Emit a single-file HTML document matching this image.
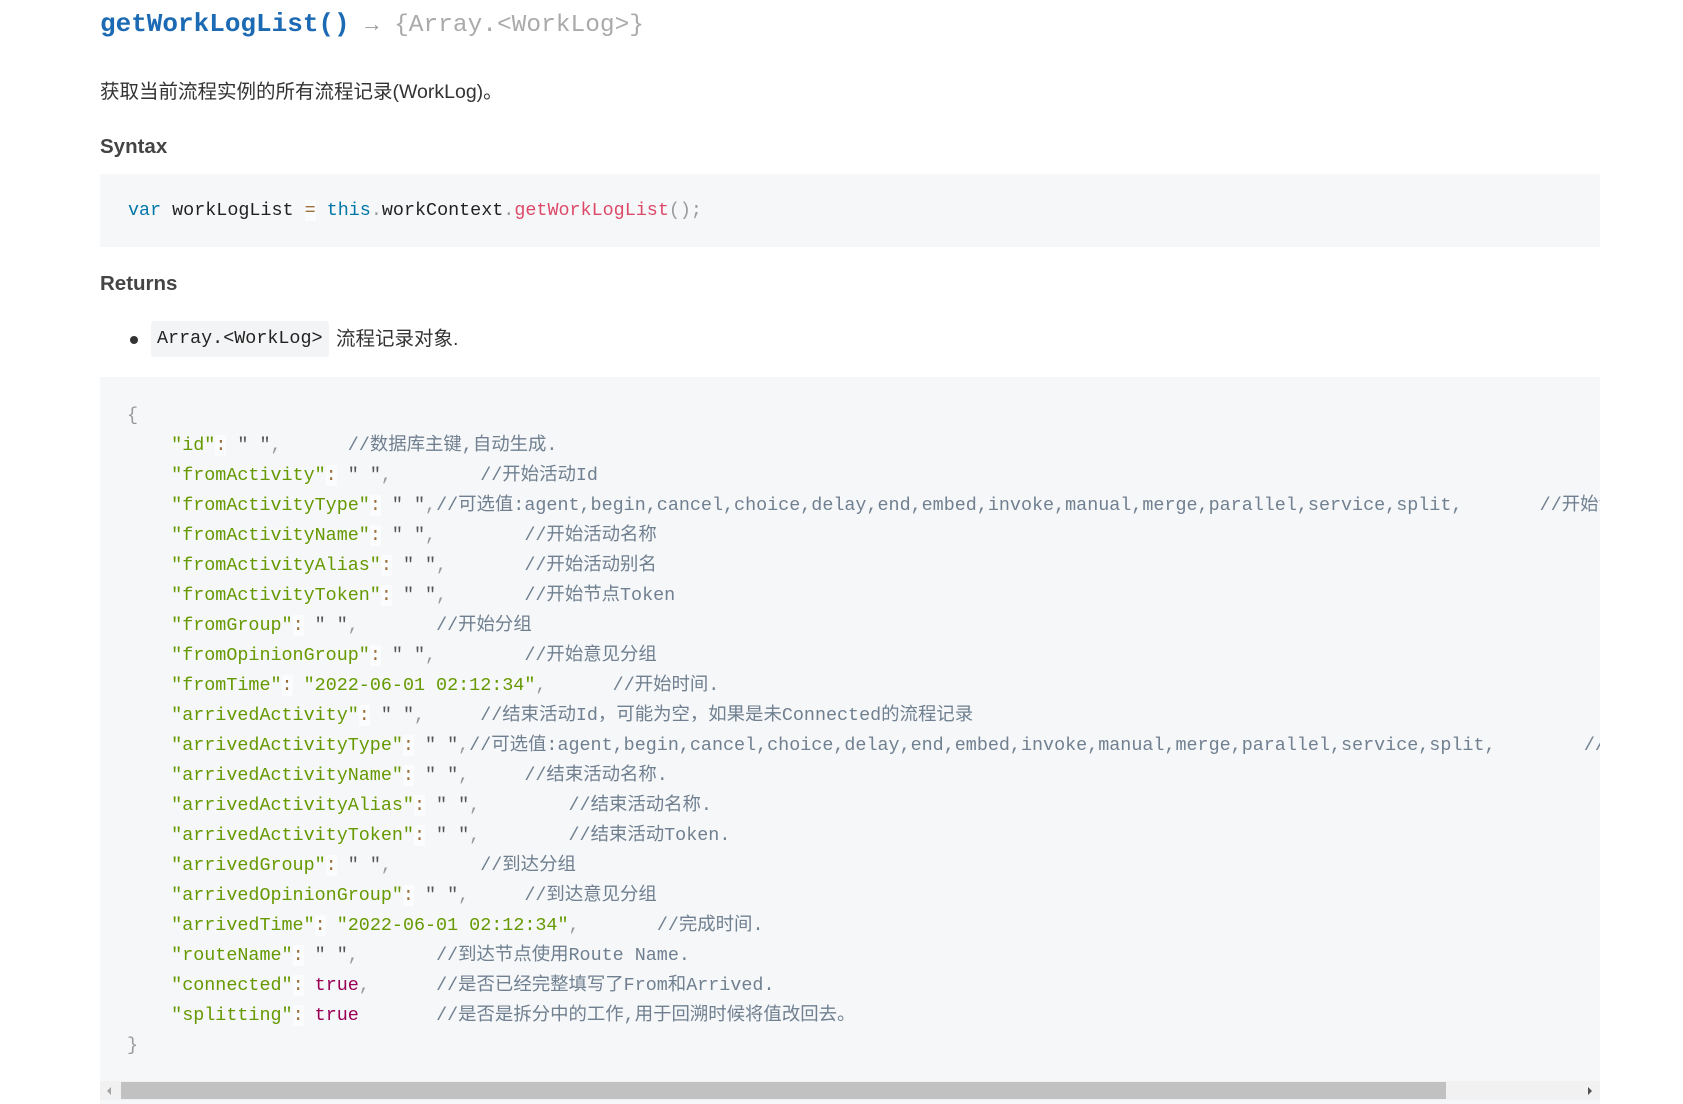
<!DOCTYPE html>
<html><head><meta charset="utf-8"><style>
body{margin:0;width:1683px;height:1104px;overflow:hidden;background:#fff;font-family:"Liberation Sans","Noto Sans CJK SC",sans-serif;color:#333;position:relative}
.a{position:absolute;white-space:pre}
.m{font-family:"Liberation Mono","Noto Sans CJK SC",monospace}
.cb{position:absolute;left:100px;width:1500px;background:#f6f7f9}
.k{color:#690}.s{color:#690}.e{color:#555}.p{color:#999}.o{color:#9a6e3a;background:rgba(255,255,255,.6)}
.c{color:#708090}.b{color:#905}.kw{color:#07a}.fn{color:#dd4a68}
.code{font-size:18.4px;line-height:30px}
</style></head><body>
<div class="a m" style="left:100px;top:6px;font-size:26px;line-height:36px"><b style="color:#1b6ab3">getWorkLogList()</b> <span style="color:#999;font-size:22px">→</span> <span style="color:#aaa;font-size:24.5px">{Array.&lt;WorkLog&gt;}</span></div>
<div class="a" style="left:100px;top:78px;font-size:19.5px;line-height:28px;color:#333">获取当前流程实例的所有流程记录(WorkLog)。</div>
<div class="a" style="left:100px;top:133px;font-size:20.5px;line-height:28px;font-weight:bold;color:#444">Syntax</div>
<div class="cb" style="top:174px;height:73px"></div>
<div class="a m code" style="left:128px;top:196px;color:#222"><span class="kw">var</span> workLogList <span class="o">=</span> <span class="kw">this</span><span class="p">.</span>workContext<span class="p">.</span><span class="fn">getWorkLogList</span><span class="p">();</span></div>
<div class="a" style="left:100px;top:270px;font-size:20.5px;line-height:28px;font-weight:bold;color:#444">Returns</div>
<div class="a" style="left:130px;top:336px;width:8px;height:8px;border-radius:50%;background:#333"></div>
<div class="a" style="left:151px;top:321px;width:178px;height:36px;background:#f3f4f5;border-radius:3px"></div>
<div class="a m" style="left:157px;top:325px;font-size:18.4px;line-height:28px;color:#222">Array.&lt;WorkLog&gt;</div>
<div class="a" style="left:336px;top:325px;font-size:19.5px;line-height:28px;color:#333">流程记录对象.</div>
<div class="cb" style="top:377px;height:727px;overflow:hidden">
<div class="a m code" style="left:27px;top:24px;color:#333"><span class="p">{</span>
    <span class="k">"id"</span><span class="o">:</span> <span class="e">" "</span><span class="p">,</span>      <span class="c">//数据库主键,自动生成.</span>
    <span class="k">"fromActivity"</span><span class="o">:</span> <span class="e">" "</span><span class="p">,</span>        <span class="c">//开始活动Id</span>
    <span class="k">"fromActivityType"</span><span class="o">:</span> <span class="e">" "</span><span class="p">,</span><span class="c">//可选值:agent,begin,cancel,choice,delay,end,embed,invoke,manual,merge,parallel,service,split,       //开始活动类型</span>
    <span class="k">"fromActivityName"</span><span class="o">:</span> <span class="e">" "</span><span class="p">,</span>        <span class="c">//开始活动名称</span>
    <span class="k">"fromActivityAlias"</span><span class="o">:</span> <span class="e">" "</span><span class="p">,</span>       <span class="c">//开始活动别名</span>
    <span class="k">"fromActivityToken"</span><span class="o">:</span> <span class="e">" "</span><span class="p">,</span>       <span class="c">//开始节点Token</span>
    <span class="k">"fromGroup"</span><span class="o">:</span> <span class="e">" "</span><span class="p">,</span>       <span class="c">//开始分组</span>
    <span class="k">"fromOpinionGroup"</span><span class="o">:</span> <span class="e">" "</span><span class="p">,</span>        <span class="c">//开始意见分组</span>
    <span class="k">"fromTime"</span><span class="o">:</span> <span class="s">"2022-06-01 02:12:34"</span><span class="p">,</span>      <span class="c">//开始时间.</span>
    <span class="k">"arrivedActivity"</span><span class="o">:</span> <span class="e">" "</span><span class="p">,</span>     <span class="c">//结束活动Id，可能为空，如果是未Connected的流程记录</span>
    <span class="k">"arrivedActivityType"</span><span class="o">:</span> <span class="e">" "</span><span class="p">,</span><span class="c">//可选值:agent,begin,cancel,choice,delay,end,embed,invoke,manual,merge,parallel,service,split,        //结束活动类型</span>
    <span class="k">"arrivedActivityName"</span><span class="o">:</span> <span class="e">" "</span><span class="p">,</span>     <span class="c">//结束活动名称.</span>
    <span class="k">"arrivedActivityAlias"</span><span class="o">:</span> <span class="e">" "</span><span class="p">,</span>        <span class="c">//结束活动名称.</span>
    <span class="k">"arrivedActivityToken"</span><span class="o">:</span> <span class="e">" "</span><span class="p">,</span>        <span class="c">//结束活动Token.</span>
    <span class="k">"arrivedGroup"</span><span class="o">:</span> <span class="e">" "</span><span class="p">,</span>        <span class="c">//到达分组</span>
    <span class="k">"arrivedOpinionGroup"</span><span class="o">:</span> <span class="e">" "</span><span class="p">,</span>     <span class="c">//到达意见分组</span>
    <span class="k">"arrivedTime"</span><span class="o">:</span> <span class="s">"2022-06-01 02:12:34"</span><span class="p">,</span>       <span class="c">//完成时间.</span>
    <span class="k">"routeName"</span><span class="o">:</span> <span class="e">" "</span><span class="p">,</span>       <span class="c">//到达节点使用Route Name.</span>
    <span class="k">"connected"</span><span class="o">:</span> <span class="b">true</span><span class="p">,</span>      <span class="c">//是否已经完整填写了From和Arrived.</span>
    <span class="k">"splitting"</span><span class="o">:</span> <span class="b">true</span>       <span class="c">//是否是拆分中的工作,用于回溯时候将值改回去。</span>
<span class="p">}</span></div>
<div class="a" style="left:0;top:704px;width:1500px;height:19px;background:#f1f1f1"></div>
<div class="a" style="left:21px;top:705px;width:1325px;height:17px;background:#c1c1c1"></div>
<div class="a" style="left:7px;top:710px;width:0;height:0;border-top:4px solid transparent;border-bottom:4px solid transparent;border-right:4px solid #a3a3a3"></div>
<div class="a" style="left:1488px;top:710px;width:0;height:0;border-top:4px solid transparent;border-bottom:4px solid transparent;border-left:4px solid #505050"></div>
</div>
</body></html>
